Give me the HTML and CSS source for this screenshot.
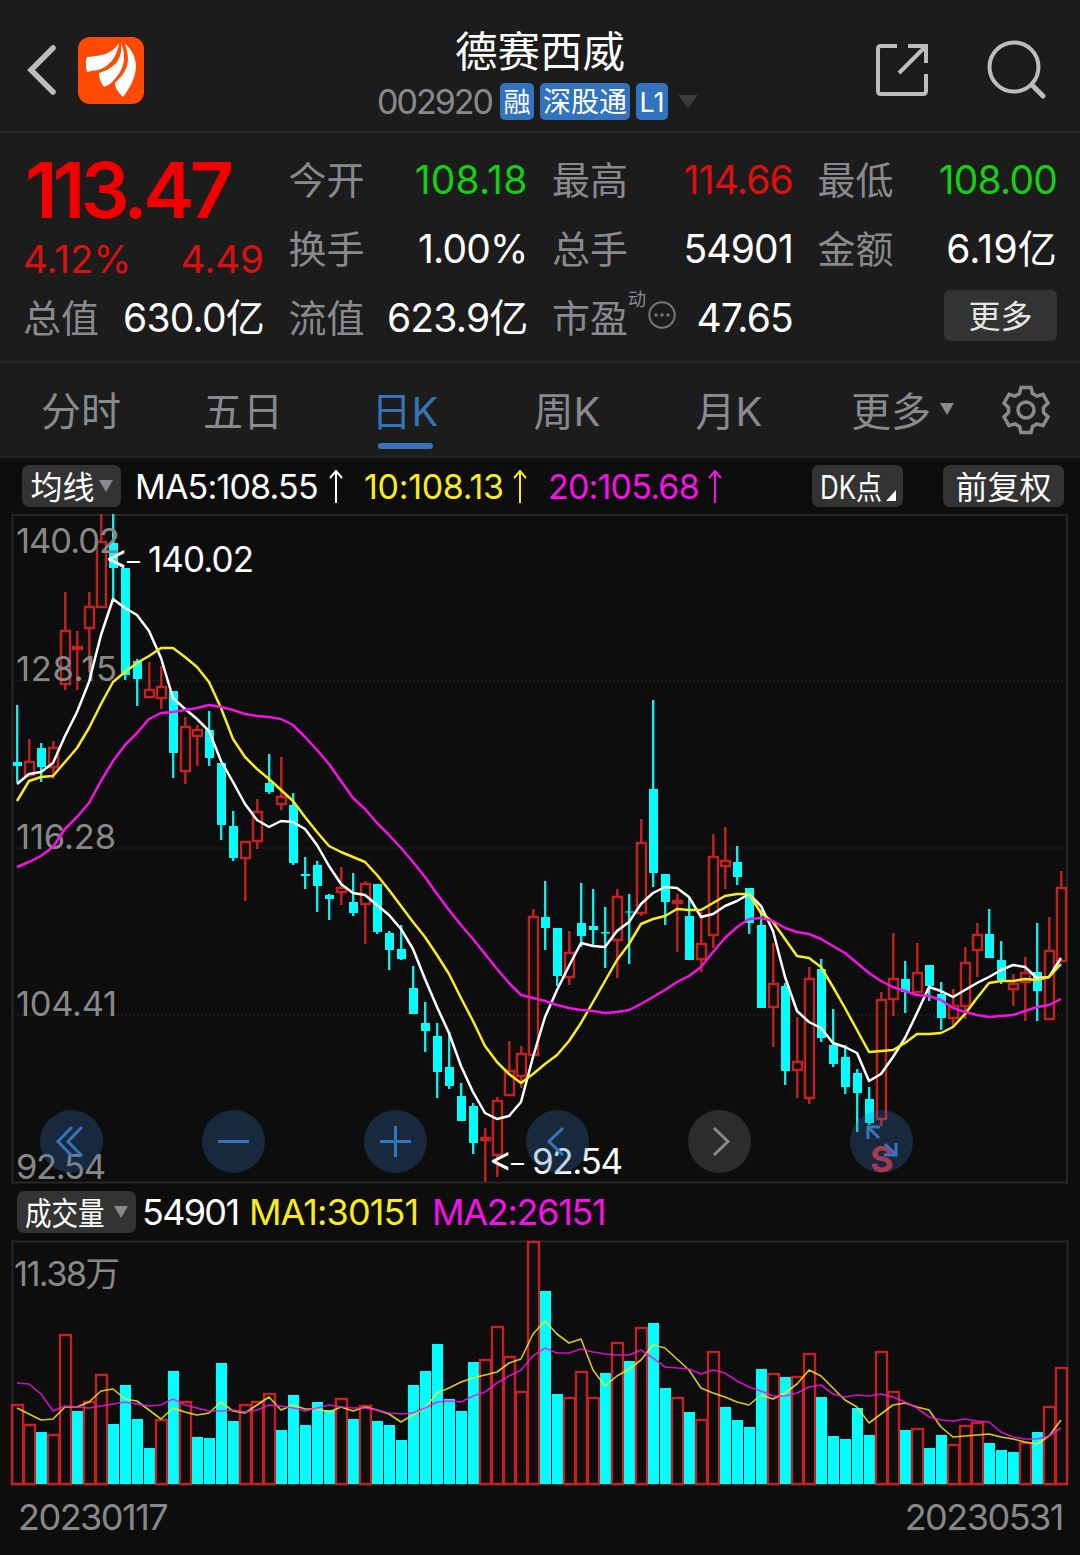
FILE: index.html
```html
<!DOCTYPE html>
<html lang="zh-CN">

<head>
    <meta charset="UTF-8">
    <title>德赛西威 002920</title>
    <link rel="stylesheet" href="styles.css">
</head>

<body>

    <header class="topbar">
        <div class="topbar-left">
            <svg class="icon-back" viewBox="0 0 32 52"><path d="M27 4 L5 26 L27 48" /></svg>
            <svg class="logo" viewBox="0 0 66 67">
                <rect width="66" height="67" rx="12" />
                <path d="M41 6 C35 16 25 19 9 20 C7 24 8 30 9 35 C15 33 19 34 23 32 C33 28 40 17 41 6 Z" />
                <path d="M43 6 C45 22 37 31 21 36 C21 42 23 46 26 50 C30 48 33 47 36 43 C46 33 49 20 43 6 Z" />
                <path d="M47 7 C53 24 50 34 37 46 C37 51 40 55 45 60 C51 52 57 43 58 30 C58 20 53 11 47 7 Z" />
            </svg>
        </div>
        <div class="title">
            <h1>德赛西威</h1>
            <p class="code">
                <span class="num">002920</span>
                <span class="tag">融</span>
                <span class="tag tag-wide">深股通</span>
                <span class="tag tag-l1">L1</span>
                <svg class="caret" viewBox="0 0 20 13"><path d="M0 0 H20 L10 13 Z" /></svg>
            </p>
        </div>
        <div class="topbar-right">
            <svg class="icon-share" viewBox="0 0 54 54">
                <path d="M22 3 H6 Q3 3 3 6 V48 Q3 51 6 51 H48 Q51 51 51 48 V31" />
                <path d="M33 3 H51 V20 M51 3 L24 30" />
            </svg>
            <svg class="icon-search" viewBox="0 0 60 60">
                <circle cx="27" cy="27" r="24.5" />
                <path d="M45 45 L56 56" />
            </svg>
        </div>
    </header>

    <section class="quote">
        <div class="price-box">
            <div class="price">113.47</div>
            <div class="change"><span>4.12%</span><span>4.49</span></div>
        </div>
        <div class="cell"><span class="label">今开</span><span class="value wide down">108.18</span></div>
        <div class="cell"><span class="label">最高</span><span class="value up">114.66</span></div>
        <div class="cell"><span class="label">最低</span><span class="value down">108.00</span></div>
        <div class="cell"><span class="label">换手</span><span class="value">1.00%</span></div>
        <div class="cell"><span class="label">总手</span><span class="value">54901</span></div>
        <div class="cell"><span class="label">金额</span><span class="value wide">6.19亿</span></div>
        <div class="cell"><span class="label">总值</span><span class="value">630.0亿</span></div>
        <div class="cell"><span class="label">流值</span><span class="value">623.9亿</span></div>
        <div class="cell">
            <span class="label">市盈<sup>动</sup><svg class="icon-dots" viewBox="0 0 28 28"><circle class="ring" cx="14" cy="14" r="12.7" /><circle cx="8" cy="14" r="1.7" /><circle cx="14" cy="14" r="1.7" /><circle cx="20" cy="14" r="1.7" /></svg></span>
            <span class="value">47.65</span>
        </div>
        <div class="cell cell-more"><button class="more">更多</button></div>
    </section>

    <nav class="tabs">
        <a class="tab">分时</a>
        <a class="tab">五日</a>
        <a class="tab active">日K</a>
        <a class="tab">周K</a>
        <a class="tab">月K</a>
        <a class="tab tab-more">更多<svg class="caret-small" viewBox="0 0 14 12"><path d="M0 0 H14 L7 12 Z" /></svg></a>
        <svg class="icon-gear" viewBox="-25 -25 50 50">
            <path d="M-5 -22.5 H5 L6.5 -16.5 L11 -13.9 L17 -15.6 L22 -6.9 L17.5 -2.6 V2.6 L22 6.9 L17 15.6 L11 13.9 L6.5 16.5 L5 22.5 H-5 L-6.5 16.5 L-11 13.9 L-17 15.6 L-22 6.9 L-17.5 2.6 V-2.6 L-22 -6.9 L-17 -15.6 L-11 -13.9 L-6.5 -16.5 Z" />
            <circle r="8" />
        </svg>
    </nav>

    <div class="legend">
        <button class="chip chip-ma">均线<svg class="caret-small" viewBox="0 0 14 12"><path d="M0 0 H14 L7 12 Z" /></svg></button>
        <span class="ma ma5">MA5:108.55</span><svg class="arrow ma5" viewBox="0 0 14 34"><path d="M7 34 V3 M1 9 L7 2 L13 9" /></svg>
        <span class="ma ma10">10:108.13</span><svg class="arrow ma10" viewBox="0 0 14 34"><path d="M7 34 V3 M1 9 L7 2 L13 9" /></svg>
        <span class="ma ma20">20:105.68</span><svg class="arrow ma20" viewBox="0 0 14 34"><path d="M7 34 V3 M1 9 L7 2 L13 9" /></svg>
        <button class="chip chip-dk"><span>DK点</span><svg viewBox="0 0 10 11"><path d="M10 0 V11 H0 Z" /></svg></button>
        <button class="chip chip-fq">前复权</button>
    </div>

    <section class="kline">
        <svg id="kline" viewBox="0 514 1080 670"></svg>
        <div class="controls">
            <button><svg viewBox="0 0 63 63"><path d="M32 17 L18 31.5 L32 46 M42 17 L28 31.5 L42 46" /></svg></button>
            <button><svg viewBox="0 0 63 63"><path d="M16 31.5 H47" /></svg></button>
            <button><svg viewBox="0 0 63 63"><path d="M16 31.5 H47 M31.5 16 V47" /></svg></button>
            <button><svg viewBox="0 0 63 63"><path d="M37 18 L23 31.5 L37 45" /></svg></button>
            <button class="disabled"><svg viewBox="0 0 63 63"><path d="M26 18 L40 31.5 L26 45" /></svg></button>
            <button><svg viewBox="0 0 63 63"><path d="M18 29 V17 H30 M18 17 L29 28 M46 33 V45 H34 M46 45 L35 34" /></svg></button>
        </div>
    </section>

    <div class="legend legend-vol">
        <button class="chip chip-vol"><span>成交量</span><svg class="caret-small" viewBox="0 0 14 12"><path d="M0 0 H14 L7 12 Z" /></svg></button>
        <span class="vol ma5">54901</span>
        <span class="vol ma10">MA1:30151</span>
        <span class="vol ma20">MA2:26151</span>
    </div>

    <section class="volume">
        <svg id="volume" viewBox="0 1240 1080 246"></svg>
    </section>

    <footer class="dates"><span>20230117</span><span>20230531</span></footer>

    <script src="chart.js"></script>
</body>

</html>
```
FILE: styles.css
```css
body {
    margin: 0;
    width: 1080px;
    height: 1555px;
    overflow: hidden;
    background-color: #0d0d0d;
    color: #fff;
    font-family: Inter, "Noto Sans CJK SC", sans-serif;
}

h1,
p {
    margin: 0;
    font-weight: 400;
}

svg {
    display: block;
    flex: none;
}

button {
    border: 0;
    padding: 0;
    color: inherit;
    font-family: inherit;
}

/* top bar */
.topbar {
    display: grid;
    grid-template-columns: 300px 1fr 300px;
    height: 133px;
    background-color: #1c1c1c;
    border-bottom: 2px solid #272727;
    box-sizing: border-box;
}

.topbar-left {
    display: flex;
    align-items: flex-start;
    padding: 37px 0 0 26px;
}

.icon-back {
    width: 32px;
    height: 52px;
    margin: 7px 20px 0 0;
    fill: none;
    stroke: #bdbdbd;
    stroke-width: 5.5;
    stroke-linecap: round;
}

.logo {
    width: 66px;
    height: 67px;
    fill: #fff;
}

.logo rect {
    fill: #ff4a05;
}

.title {
    padding-top: 22px;
}

.title h1 {
    height: 59px;
    line-height: 60px;
    font-size: 42.5px;
    text-align: center;
}

.code {
    display: flex;
    align-items: center;
    height: 40px;
    margin-left: 77px;
    color: #8a8a8e;
}

.code .num {
    width: 123px;
    font-size: 34px;
    letter-spacing: -2px;
}

.tag {
    width: 34px;
    height: 37px;
    margin-right: 6px;
    border-radius: 5px;
    background-color: #3273c0;
    color: #fff;
    font-size: 27px;
    line-height: 39px;
    text-align: center;
    flex: none;
}

.tag-wide {
    width: 90px;
    font-size: 28px;
}

.tag-l1 {
    width: 32px;
    margin-right: 10px;
    font-size: 27px;
}

.caret {
    width: 20px;
    height: 13px;
    fill: #3d3d3d;
}

.topbar-right {
    display: flex;
    align-items: flex-start;
    padding: 40px 0 0 95px;
    fill: none;
    stroke: #bdbdbd;
    stroke-width: 4;
}

.icon-share {
    width: 54px;
    height: 54px;
    margin: 3px 58px 0 0;
}

.icon-search {
    width: 60px;
    height: 60px;
}

.icon-search path {
    stroke-width: 5;
    stroke-linecap: round;
}

/* quote numbers */
.quote {
    display: grid;
    grid-template-columns: 241px 239px 241px 239.5px;
    grid-template-rows: 69px 69px 69px;
    column-gap: 24.5px;
    height: 228px;
    padding: 12px 0 0 23px;
    box-sizing: border-box;
    background-color: #1c1c1c;
}

.price-box {
    grid-row: 1 / 3;
    color: #f00000;
}

.price {
    height: 90px;
    margin-left: 2px;
    line-height: 90px;
    font-size: 77px;
    font-weight: 600;
    letter-spacing: -4.7px;
}

.change {
    display: flex;
    justify-content: space-between;
    line-height: 48px;
    font-size: 38.5px;
    color: #dc1010;
}

.cell {
    display: flex;
    justify-content: space-between;
    align-items: baseline;
    height: 69px;
    line-height: 69px;
    white-space: nowrap;
}

.label {
    display: flex;
    color: #8a8a8e;
    font-size: 38px;
}

.label sup {
    height: 30px;
    margin-top: 6px;
    line-height: 20px;
    font-size: 18px;
}

.icon-dots {
    width: 28px;
    height: 28px;
    margin: 17px 0 0 2px;
    fill: #77777a;
}

.icon-dots .ring {
    fill: none;
    stroke: #77777a;
    stroke-width: 2;
}

.value {
    font-size: 39px;
    letter-spacing: -.8px;
}

.value.wide {
    letter-spacing: .2px;
}

.up {
    color: #dc1010;
}

.down {
    color: #14cf14;
}

.cell-more {
    justify-content: flex-end;
    align-items: flex-start;
}

.more {
    width: 113px;
    height: 51px;
    margin-top: 7px;
    border-radius: 6px;
    background-color: #333;
    color: #e6e6e6;
    font-size: 32px;
    line-height: 53px;
}

/* period tabs */
.tabs {
    display: flex;
    height: 97px;
    border-top: 2px solid #292929;
    border-bottom: 2px solid #242424;
    box-sizing: border-box;
    background-color: #1c1c1c;
    color: #8a8a8e;
    font-size: 40px;
    line-height: 98px;
}

.tab {
    display: flex;
    flex-direction: column;
    align-items: center;
    width: 162px;
    height: 93px;
}

.tab.active {
    color: #3674b9;
}

.tab.active::after {
    content: "";
    width: 55px;
    height: 6px;
    margin-top: -18px;
    border-radius: 3px;
    background-color: #3674b9;
}

.tab-more {
    flex-direction: row;
    width: 150px;
    padding-left: 41px;
    line-height: 102px;
    height: 97px;
}

.caret-small {
    width: 14px;
    height: 12px;
    fill: #8a8a8e;
}

.tab-more .caret-small {
    margin: -6px 0 0 9px;
}

.icon-gear {
    width: 50px;
    height: 50px;
    margin-top: 22px;
    fill: none;
    stroke: #8a8a8e;
    stroke-width: 3.5;
}

/* legends over the charts */
.legend {
    display: flex;
    align-items: center;
    height: 56px;
    padding-left: 22px;
    white-space: nowrap;
}

.chip {
    display: flex;
    align-items: center;
    justify-content: center;
    height: 42px;
    padding-top: 4px;
    border-radius: 7px;
    background-color: #333;
    font-size: 32px;
    line-height: 38px;
    flex: none;
}

.chip .caret-small {
    margin-top: -4px;
}

.chip-ma {
    width: 99px;
    margin-right: 14px;
    gap: 4px;
}

.ma {
    font-size: 34px;
    letter-spacing: -.8px;
}

.ma.ma5 {
    width: 194px;
}

.ma.ma10 {
    width: 149px;
    letter-spacing: -.3px;
}

.ma.ma20 {
    width: 160px;
}

.ma5 {
    color: #fff;
}

.ma10 {
    color: #f8ec1c;
}

.ma20 {
    color: #f512e4;
}

.arrow {
    width: 14px;
    height: 34px;
    margin-right: 21px;
    fill: none;
    stroke: currentColor;
    stroke-width: 2;
}

.chip-dk {
    width: 91px;
    margin-left: 69px;
    gap: 5px;
    justify-content: flex-start;
}

.chip-dk span {
    width: 61px;
    margin-left: 8px;
    transform: scaleX(.81);
    transform-origin: 0 50%;
}

.chip-dk svg {
    width: 10px;
    height: 11px;
    margin-top: 15px;
    fill: #fff;
}

.chip-fq {
    width: 121px;
    margin-left: 40px;
}

.kline {
    position: relative;
    height: 670px;
}

.kline > svg,
.volume > svg {
    width: 1080px;
    height: 100%;
}

.controls {
    position: absolute;
    left: 40px;
    bottom: 11px;
    display: flex;
    gap: 99px;
}

.controls button {
    width: 63px;
    height: 63px;
    border-radius: 50%;
    background-color: rgba(54, 116, 185, .28);
    fill: none;
    stroke: #3674b9;
    stroke-width: 3;
}

.controls .disabled {
    background-color: rgba(124, 124, 124, .28);
    stroke: #8a8a8a;
}

.legend-vol {
    padding-left: 17px;
}

.chip-vol {
    width: 119px;
    margin-right: 6px;
    gap: 10px;
}

.chip-vol span {
    width: 79px;
    transform: scaleX(.83);
    transform-origin: 0 50%;
}

.vol {
    font-size: 36px;
    letter-spacing: -1.3px;
}

.vol.ma5 {
    width: 107px;
    letter-spacing: -1.7px;
}

.vol.ma10 {
    width: 183px;
    letter-spacing: -.9px;
}

.volume {
    height: 246px;
}

.dates {
    display: flex;
    justify-content: space-between;
    padding: 0 17px 0 18px;
    color: #888;
    font-size: 36px;
    line-height: 62px;
    letter-spacing: -1.5px;
}

/* chart drawing */
.frame {
    fill: none;
    stroke: #272727;
    stroke-width: 2;
}

.grid {
    stroke: #1b1b1b;
    stroke-width: 2;
    stroke-dasharray: 2 2;
}

.rise {
    fill: none;
    stroke: #c42222;
    stroke-width: 2.4;
}

.fall {
    fill: #00ffff;
}

.fall-wick {
    stroke: #1ce6e8;
    stroke-width: 2.4;
}

.line {
    fill: none;
    stroke: currentColor;
    stroke-width: 2.5;
    stroke-linejoin: round;
}

.line-thin {
    stroke-width: 1.6;
    opacity: .85;
}

.axis {
    fill: #888;
    font-size: 34.5px;
}

.mark {
    fill: #fff;
    font-size: 35px;
}

.mark-dash {
    font-size: 26px;
}

.sell {
    fill: #d4232a;
    font-size: 36px;
    font-weight: 700;
}
```
FILE: chart.js
```js
// one entry per day: [r = rise / c = fall, high, body top, body bottom, low]
const candles = [
    ["c",705,762,766,782],["r",739,762,775,777],["c",743,748,767,782],["r",741,748,767,779],
    ["r",592,631,684,690],["r",631,647,649,690],["r",592,607,628,672],["r",514,542,607,607],
    ["c",514,543,568,600],["c",568,568,675,680],["c",659,661,679,706],["r",662,690,697,697],
    ["r",666,687,698,709],["c",691,691,753,778],["r",717,727,771,784],["r",725,730,736,766],
    ["c",711,730,758,766],["c",763,763,825,840],["c",811,826,858,861],["r",841,842,858,901],
    ["r",799,812,841,849],["c",754,783,792,794],["r",757,797,804,810],["c",793,805,863,865],
    ["c",857,874,876,889],["c",861,865,886,912],["c",894,895,899,920],["r",867,888,892,905],
    ["c",873,902,913,916],["r",881,884,904,944],["c",884,884,932,934],["c",931,933,950,970],
    ["c",925,949,959,960],["c",966,988,1014,1014],["c",1002,1023,1031,1052],["c",1023,1036,1072,1098],
    ["c",1032,1067,1086,1089],["c",1083,1096,1121,1121],["c",1103,1106,1143,1154],["r",1128,1138,1140,1182],
    ["r",1097,1101,1155,1177],["r",1041,1071,1095,1096],["r",1046,1054,1076,1088],["r",909,917,1055,1056],
    ["c",881,917,928,950],["c",928,928,976,986],["r",931,953,977,985],["c",883,923,936,947],
    ["c",889,926,930,947],["c",907,932,933.5,968],["r",889,897,940,978],["c",894,911.5,912.5,964],
    ["r",819,843,913,916],["c",700,789,873,887],["c",874,874,902,925],["r",894,901,903,952],
    ["c",897,916,960,960],["r",912,944,959,972],["r",834,857,935,948],["r",827,861,866,889],
    ["c",846,862,877,885],["c",888,888,923,934],["c",910,925,1008,1008],["r",943,984,1007,1047],
    ["c",983,986,1071,1085],["r",1017,1062,1070,1098],["r",967,979,1098,1104],["c",959,969,1038,1042],
    ["c",1009,1045,1064,1067],["c",1045,1057,1087,1094],["c",1069,1073,1093,1132],["c",1087,1099,1123,1125],
    ["r",992,1000,1119,1126],["r",933,979,999,1016],["c",961,979,992,1013],["r",943,973,992,993],
    ["c",965,965,986,1001],["c",982,994,1018,1030],["r",989,1006,1018,1026],["r",947,963,1006,1019],
    ["r",923,935,950,977],["c",909,934,958,958],["c",941,960,980,984],["r",974,984,989,1006],
    ["r",957,973,982,1021],["c",923,972,991,1021],["r",917,951,1019,1020],["r",871,888,961,962]
];

const ma5 = [784,774,772,763,736,712,682,635,599,608,615,631,658,698,709,719,731,761,782,804,820,827,
    821,822,829,845,866,884,893,895,905,915,929,949,979,1007,1033,1066,1092,1113,1119,1116,1102,1057,
    1017,990,966,943,946,947,931,922,904,893,887,888,897,917,914,906,901,894,906,931,977,1011,
    1022,1028,1043,1047,1053,1081,1074,1057,1038,1013,987,991,997,990,983,977,970,965,967,978,977,958];
const ma10 = [801,781,777,776,762,748,728,704,682,672,663,656,648,648,657,667,682,708,739,757,769,779,
    790,801,817,832,846,852,857,862,875,890,906,922,937,955,974,998,1021,1046,1062,1074,1083,1074,
    1064,1055,1041,1023,1002,981,960,944,924,919,916,909,910,910,903,896,894,894,913,922,939,956,
    958,967,987,1008,1030,1052,1051,1050,1043,1034,1034,1033,1027,1014,998,983,981,981,979,980,977,964];
const ma20 = [867,862,856,847,829,817,803,781,761,745,733,719,713,712,710,708,705,707,710,714,716,717,
    719,725,737,750,764,781,798,809,823,835,848,862,877,894,910,925,939,954,969,983,995,998,
    1001,1005,1008,1010,1011,1013,1012,1010,1004,997,990,982,976,967,952,938,927,919,918,921,928,932,
    934,939,946,953,963,973,981,987,991,995,996,1000,1008,1012,1015,1017,1016,1015,1011,1007,1005,999];

// volume: colour of each bar and its top
const volColors = "rrcrrcrrccccrcrccccrrrcccccrcrcccccccccrrrrrccrrrcrcrccrcrrccccrcrrcccccrrcrccrrrcccrcrr";
const volTops = [1404,1424,1432,1434,1334,1411,1401,1374,1424,1385,1419,1448,1419,1371,1401,1437,1438,1363,1421,1404,1401,1393,
    1430,1395,1425,1402,1410,1398,1419,1405,1421,1425,1440,1385,1371,1344,1399,1411,1362,1359,1326,1356,1391,1241,
    1291,1394,1397,1371,1397,1373,1342,1361,1327,1323,1388,1397,1412,1419,1351,1407,1420,1427,1369,1373,1377,1376,
    1353,1397,1436,1439,1408,1435,1351,1391,1430,1428,1448,1435,1444,1425,1422,1443,1450,1452,1442,1432,1406,1367];
const volMa1 = [1408,1414,1420,1419,1407,1407,1402,1391,1389,1399,1401,1410,1419,1408,1412,1415,1413,1402,1411,1413,1405,1397,
    1410,1405,1409,1409,1412,1407,1411,1407,1410,1414,1422,1415,1408,1393,1388,1382,1378,1375,1372,1363,1359,1334,
    1321,1334,1343,1339,1370,1386,1376,1369,1360,1345,1348,1359,1370,1388,1393,1397,1402,1405,1395,1399,1393,1384,
    1370,1376,1388,1400,1407,1423,1414,1405,1403,1407,1410,1427,1437,1436,1435,1434,1437,1439,1442,1444,1436,1420];
const volMa2 = [1383,1384,1394,1411,1406,1407,1408,1406,1404,1402,1404,1406,1405,1399,1405,1408,1411,1411,1410,1412,1410,1405,
    1406,1408,1411,1408,1405,1407,1408,1408,1410,1413,1414,1413,1408,1402,1401,1402,1396,1392,1383,1376,1370,1356,
    1348,1353,1353,1349,1352,1354,1355,1355,1350,1358,1367,1368,1369,1374,1370,1373,1381,1387,1391,1396,1396,1393,
    1387,1385,1394,1397,1395,1396,1394,1397,1402,1408,1417,1420,1421,1419,1421,1422,1432,1437,1439,1439,1436,1428];

const x = i => 17 + i * 12;

function line(values, cls) {
    let points = values.map((y, i) => x(i) + "," + y).join(" ");
    return `<polyline class="line ${cls}" points="${points}"/>`;
}

function text(cls, left, baseline, width, content) {
    return `<text class="${cls}" x="${left}" y="${baseline}" textLength="${width}">${content}</text>`;
}

function mark(left, baseline, width, content) {
    return text("mark", left, baseline - 3, 22, "&lt;")
        + text("mark mark-dash", left + 22, baseline - 2, 20, "–")
        + text("mark", left + 43, baseline, width, content);
}

function drawKline() {
    let out = '<rect class="frame" x="12.5" y="515" width="1054.5" height="667.5"/>';
    [681, 848, 1015].forEach(y => {
        out += `<line class="grid" x1="13" x2="1067" y1="${y}" y2="${y}"/>`;
    });
    candles.forEach(([type, high, top, bottom, low], i) => {
        let cx = x(i);
        if (type == "r") {
            out += `<path class="rise" d="M${cx + .3} ${high}V${top}M${cx + .3} ${bottom}V${low}M${cx - 4} ${top}h9V${bottom}h-9Z"/>`;
        } else {
            out += `<path class="fall-wick" d="M${cx + .2} ${high}V${low}"/>`;
            out += `<rect class="fall" x="${cx - 4}" y="${top}" width="9" height="${bottom - top}"/>`;
        }
    });
    out += text("axis", 16, 553, 104, "140.02");
    out += text("axis", 16, 681, 101, "128.15");
    out += text("axis", 16, 849, 100, "116.28");
    out += text("axis", 16, 1016, 101, "104.41");
    out += text("axis", 16, 1179, 90, "92.54");
    out += line(ma5, "ma5") + line(ma10, "ma10") + line(ma20, "ma20");
    out += mark(105, 572, 106, "140.02");
    out += mark(489, 1174, 91, "92.54");
    out += text("sell", 870, 1172, 23, "S");
    document.querySelector("#kline").innerHTML = out;
}

function drawVolume() {
    let out = '<rect class="frame" x="12.5" y="1241.5" width="1055" height="243"/>';
    volTops.forEach((top, i) => {
        let cx = x(i);
        if (volColors[i] == "r") {
            out += `<rect class="rise" x="${cx - 5}" y="${top + 1}" width="11" height="${1483 - top}"/>`;
        } else {
            out += `<rect class="fall" x="${cx - 5}" y="${top}" width="11" height="${1484 - top}"/>`;
        }
    });
    out += line(volMa1, "line-thin ma10") + line(volMa2, "line-thin ma20");
    out += text("axis", 14, 1286, 106, "11.38万");
    document.querySelector("#volume").innerHTML = out;
}

drawKline();
drawVolume();
```
